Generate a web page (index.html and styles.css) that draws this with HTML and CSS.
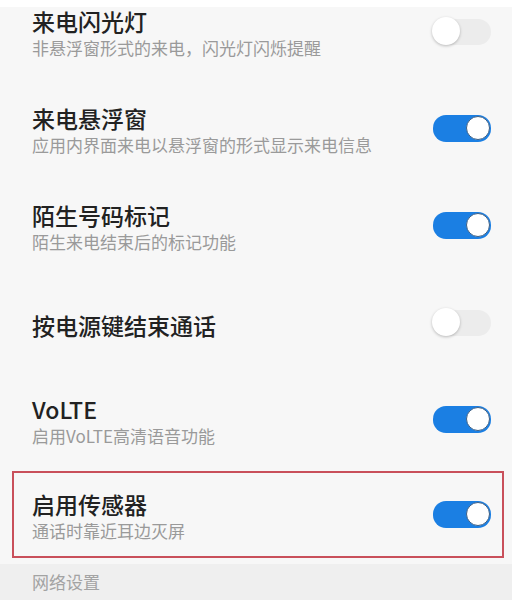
FILE: index.html
```html
<!DOCTYPE html>
<html lang="zh-CN">
<head>
  <meta charset="UTF-8">
  <meta name="viewport" content="width=device-width, initial-scale=1.0">
  <title>通话设置</title>
  <link rel="stylesheet" href="styles.css">
</head>
<body>
<div class="page">
  <ul class="list">
    <li class="item">
      <div class="text">
        <div class="title">来电闪光灯</div>
        <div class="desc">非悬浮窗形式的来电，闪光灯闪烁提醒</div>
      </div>
      <span class="switch"></span>
    </li>
    <li class="item">
      <div class="text">
        <div class="title">来电悬浮窗</div>
        <div class="desc">应用内界面来电以悬浮窗的形式显示来电信息</div>
      </div>
      <span class="switch on"></span>
    </li>
    <li class="item">
      <div class="text">
        <div class="title">陌生号码标记</div>
        <div class="desc">陌生来电结束后的标记功能</div>
      </div>
      <span class="switch on"></span>
    </li>
    <li class="item">
      <div class="text">
        <div class="title">按电源键结束通话</div>
      </div>
      <span class="switch"></span>
    </li>
    <li class="item">
      <div class="text">
        <div class="title">VoLTE</div>
        <div class="desc">启用VoLTE高清语音功能</div>
      </div>
      <span class="switch on"></span>
    </li>
    <li class="item marked">
      <div class="text">
        <div class="title">启用传感器</div>
        <div class="desc">通话时靠近耳边灭屏</div>
      </div>
      <span class="switch on"></span>
    </li>
  </ul>
  <div class="section">网络设置</div>
</div>
</body>
</html>
```

FILE: styles.css
```css
body {
  font-family: "Noto Sans CJK SC", "Noto Sans", sans-serif;
  margin: 0;
  padding: 0;
  background-color: #fff;
}

.page {
  display: flow-root;
  width: 512px;
  margin-top: 7px;
  background-color: #f7f7f7;
}

.list {
  list-style: none;
  margin: -24px 0 0;
  padding: 0;
}

.item {
  display: flex;
  align-items: center;
  justify-content: space-between;
  height: 97px;
  padding: 0 21px 0 32px;
  box-sizing: border-box;
}

.item.marked {
  height: 87px;
  margin: 3px 8px 0 12px;
  padding: 0 11px 0 18px;
  border: 2px solid #c9505b;
}

.text {
  padding-top: 5px;
}

.title {
  font-size: 23px;
  font-weight: 500;
  line-height: 28px;
  color: #222;
}

.desc {
  font-size: 17px;
  line-height: 26px;
  color: #9a9a9a;
}

.switch {
  position: relative;
  flex: none;
  width: 58px;
  height: 26px;
  border-radius: 13px;
  background-color: #ececec;
}

.switch::after {
  content: "";
  position: absolute;
  left: -1px;
  top: -2px;
  width: 28px;
  height: 28px;
  border-radius: 50%;
  background-color: #fff;
  box-shadow: 0 1px 3px rgba(0, 0, 0, 0.25);
}

.switch.on {
  height: 27px;
  background-color: #1b7fe3;
}

.switch.on::after {
  left: auto;
  right: 1px;
  top: 1px;
  width: 22px;
  height: 22px;
  border: 1.5px solid #3c5f85;
  box-shadow: none;
}

.section {
  margin-top: 6px;
  height: 36px;
  line-height: 36px;
  padding-left: 32px;
  font-size: 17px;
  color: #a3a3a3;
  background-color: #efefef;
}
```
